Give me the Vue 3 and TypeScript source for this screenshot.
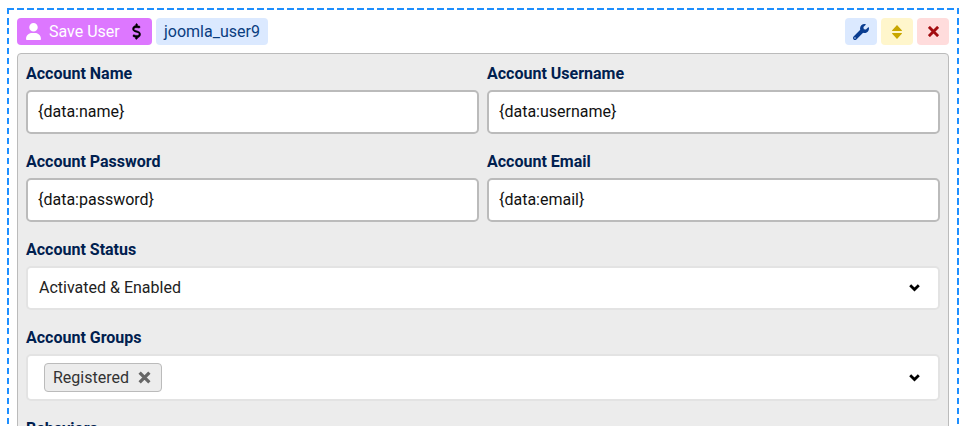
<script setup lang="ts">
const rows = [
  [{ label: 'Account Name', value: '{data:name}' }, { label: 'Account Username', value: '{data:username}' }],
  [{ label: 'Account Password', value: '{data:password}' }, { label: 'Account Email', value: '{data:email}' }],
]
</script>

<template>
  <div class="frame">
    <div class="head">
      <div class="title">
        <svg class="user" viewBox="0 0 448 512" width="15" height="17"><path fill="#fff" d="M224 256a128 128 0 1 0 0-256 128 128 0 1 0 0 256zm-45.700 48C79.800 304 0 383.800 0 482.300 0 498.700 13.300 512 29.700 512h388.600c16.400 0 29.700-13.300 29.700-29.700C448 383.800 368.200 304 269.700 304h-91.400z"/></svg>
        <span class="title-text">Save User</span>
        <svg class="dollar" viewBox="-20 -10 360 532" width="11" height="17"><path fill="#000" stroke="#000" stroke-width="18" d="M160 0c17.700 0 32 14.300 32 32v35.700c1.600.2 3.100.4 4.700.7 10.600 1.600 42.100 6.700 55.100 10 17.100 4.300 27.500 21.700 23.200 38.900s-21.700 27.500-38.900 23.200c-9.300-2.400-37.600-7-48.900-8.700-32.100-4.800-59.600-2.400-78.500 6.100-18.200 8.200-25.100 19.400-27 30.100-2.200 12.300-.4 19.100 1.500 23.300 2.100 4.400 5.400 8.400 11.100 12.400 12.900 9.100 32.900 15.200 62.500 24.100l3.300 1c26.200 7.900 60.800 18.300 86.600 37.200 14.100 10.300 27.400 24.200 35.600 42.900 8.300 19 10.100 40.100 6.100 62.600-7.200 40.700-34 68-67.400 82.300-10.100 4.300-20.900 7.400-32 9.500V480c0 17.700-14.300 32-32 32s-32-14.300-32-32v-34.900c-.4-.1-.9-.1-1.300-.2-16.100-2.600-43.600-10.300-62.300-18.900-16-7.400-23-26.300-15.700-42.400s26.300-23 42.400-15.700c14.600 6.700 37.900 13.300 50.400 15.400 33.200 5.100 59.600 2.100 77.300-5.600 16.600-7.100 24.200-17.500 26.300-29.700 1.900-10.900.8-18.100-1.500-23.400-2.400-5.500-6.800-11-14.400-16.500-16.400-12-40.400-19.500-69.900-28.400l-3-.9c-25.100-7.500-57.200-17.100-81.200-34-13.100-9.200-25.200-21.600-32.800-38.300-7.700-16.900-9.200-35.700-5.500-56.100 6.800-38.800 33.300-64.700 66.300-79.500 10.900-4.900 22.800-8.500 35.200-10.800V32c0-17.700 14.300-32 32-32z"/></svg>
      </div>
      <div class="name-tag">joomla_user9</div>
      <div class="actions">
        <button class="act blue" aria-label="Settings">
          <svg viewBox="0 0 512 512" width="16" height="16"><path fill="#0a3d91" d="M507.700 109.100c-2.200-9-13.500-12-20-5.500l-74.400 74.400-67.900-11.300-11.300-67.900 74.400-74.400c6.600-6.600 3.400-17.900-5.700-20.100-47.400-11.700-99.500 1-136.300 37.800-39.400 39.400-50.400 96.100-33.500 145.800L18.700 402.200c-25 25-25 65.500 0 90.500 25 25 65.500 25 90.500 0l214.200-214.100c49.800 16.600 106.300 5.600 145.900-34 36.900-36.900 49.600-89.100 38.400-135.500zM64 472c-13.300 0-24-10.700-24-24s10.700-24 24-24 24 10.700 24 24-10.700 24-24 24z"/></svg>
        </button>
        <button class="act yellow" aria-label="Collapse">
          <svg viewBox="0 0 10 14" width="10" height="14"><path fill="#c8a600" d="M5 0 9.800 5.300c.3.400.1.700-.3.700H.5c-.4 0-.6-.3-.3-.7zM5 14 .2 8.700c-.3-.4-.1-.7.3-.7h9c.4 0 .6.300.3.700z"/></svg>
        </button>
        <button class="act red" aria-label="Remove">
          <svg viewBox="0 0 10 10" width="11" height="11"><path stroke="#a30d11" stroke-width="2.600" d="M.8.8l8.400 8.400M9.200.8.800 9.200"/></svg>
        </button>
      </div>
    </div>

    <div class="panel">
      <div v-for="(row, i) in rows" :key="i" class="grid">
        <div v-for="field in row" :key="field.label" class="field">
          <label class="label">{{ field.label }}</label>
          <input class="input" :value="field.value" />
        </div>
      </div>

      <div class="field">
        <label class="label">Account Status</label>
        <div class="select">
          <span class="select-value">Activated &amp; Enabled</span>
          <svg class="chev" viewBox="0 0 11 8" width="11" height="8"><path fill="none" stroke="#000" stroke-width="2.800" d="M1.200 1.300 5.500 5.600l4.300-4.300"/></svg>
        </div>
      </div>

      <div class="field">
        <label class="label">Account Groups</label>
        <div class="select multi">
          <span class="chip">Registered
            <svg viewBox="0 0 12 12" width="13" height="13"><path stroke="#666" stroke-width="3" d="M1.500 1.500l9 9M10.500 1.500l-9 9"/></svg>
          </span>
          <svg class="chev" viewBox="0 0 11 8" width="11" height="8"><path fill="none" stroke="#000" stroke-width="2.800" d="M1.200 1.300 5.500 5.600l4.300-4.300"/></svg>
        </div>
      </div>

      <div class="field">
        <label class="label">Behaviors</label>
        <div class="select"></div>
      </div>
    </div>
  </div>
</template>

<style scoped>
.frame {
  box-sizing: border-box;
  width: 952px;
  margin: 8px 0 0 7px;
  padding: 10px;
  background:
    repeating-linear-gradient(90deg, #1e8fff 0 7px, transparent 7px 10px) left top / 100% 2px no-repeat,
    repeating-linear-gradient(90deg, #1e8fff 0 7px, transparent 7px 10px) left bottom / 100% 2px no-repeat,
    repeating-linear-gradient(180deg, #1e8fff 0 6.500px, transparent 6.500px 10px) left top / 2px 100% no-repeat,
    repeating-linear-gradient(180deg, #1e8fff 0 6.500px, transparent 6.500px 10px) right top / 2px 100% no-repeat;
  font-family: Roboto, "Liberation Sans", sans-serif;
  font-size: 16px;
  color: #000;
}
.head {
  display: flex;
  align-items: center;
  gap: 4px;
  height: 27px;
  margin-bottom: 8px;
}
.title {
  display: flex;
  align-items: center;
  box-sizing: border-box;
  width: 135px;
  height: 27px;
  padding-left: 9px;
  background: #dd77ff;
  border-radius: 4px;
  color: #fff;
}
.title-text {
  margin-left: 8px;
}
.dollar {
  margin-left: 11px;
}
.name-tag {
  display: flex;
  align-items: center;
  height: 27px;
  padding: 0 8px;
  background: #dbe9ff;
  border-radius: 4px;
  color: #0a3d80;
}
.actions {
  display: flex;
  gap: 4px;
  margin-left: auto;
}
.act {
  display: flex;
  align-items: center;
  justify-content: center;
  width: 32px;
  height: 27px;
  padding: 0;
  border: 0;
  border-radius: 4px;
}
.blue { background: #dbe9ff; }
.yellow { background: #fff6cc; }
.red { background: #ffdcdc; }
.panel {
  padding: 8px;
  background: #ececec;
  border: 1px solid #bbb;
  border-radius: 4px;
}
.grid {
  display: grid;
  grid-template-columns: 1fr 1fr;
  gap: 8px;
}
.field {
  margin-bottom: 16px;
}
.label {
  display: block;
  height: 28px;
  line-height: 24px;
  font-weight: 700;
  font-size: 16px;
  color: #00204f;
}
.input {
  display: block;
  box-sizing: border-box;
  width: 100%;
  height: 44px;
  padding: 0 10px 2px;
  background: #fff;
  border: 2px solid #bbb;
  border-radius: 5px;
  font: 16px Roboto, sans-serif;
  color: #111;
  outline: none;
}
.select {
  display: flex;
  align-items: center;
  justify-content: space-between;
  box-sizing: border-box;
  height: 44px;
  padding: 0 18px 0 11px;
  background: #fff;
  border: 2px solid #e3e3e3;
  border-radius: 5px;
}
.select-value {
  margin-bottom: 2px;
  color: #222;
}
.multi {
  height: 47px;
  padding-left: 16px;
}
.chip {
  display: flex;
  align-items: center;
  gap: 9px;
  box-sizing: border-box;
  height: 29px;
  padding: 0 10px 0 8px;
  background: #ececec;
  border: 1px solid #bbb;
  border-radius: 4px;
  color: #333;
}
</style>

<style>
html, body {
  overflow: hidden;
  height: 426px;
  background: #fff;
}
</style>
